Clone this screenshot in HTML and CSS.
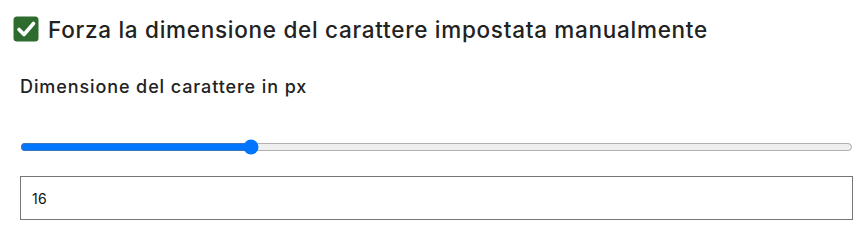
FILE: index.html
```html
<!DOCTYPE html>
<html lang="it">
<head>
<meta charset="utf-8">
<link rel="stylesheet" href="styles.css">
</head>
<body>
<div class="panel">
  <label class="force">
    <span class="check">
      <svg viewBox="0 0 26 26" width="26" height="26">
        <rect x="0.5" y="0.5" width="25" height="25" rx="3.5" fill="#2e6b2f"/>
        <path d="M6 13.5 L11 18.5 L20.5 7.5" fill="none" stroke="#fff" stroke-width="3.6" stroke-linecap="round" stroke-linejoin="round"/>
      </svg>
    </span>
    <span class="force-text">Forza la dimensione del carattere impostata manualmente</span>
  </label>
  <div class="field">
    <div class="field-label">Dimensione del carattere in px</div>
    <input class="range" type="range" min="10" max="32" value="16">
    <input class="num" type="text" value="16">
  </div>
</div>
</body>
</html>
```
FILE: styles.css
```css
html, body {
  margin: 0;
  padding: 0;
  background: #fff;
}
.panel {
  font-family: Inter, "Noto Sans", sans-serif;
  color: #222;
  padding: 16px 7px 0 20px;
}
.force {
  display: flex;
  align-items: center;
  gap: 9px;
  margin-left: -7px;
  height: 26px;
}
.check {
  display: block;
  width: 26px;
  height: 26px;
}
.check svg {
  display: block;
}
.force-text {
  font-size: 22.5px;
  font-weight: 500;
  letter-spacing: 0.72px;
}
.field {
  display: flex;
  flex-direction: column;
  padding-top: 34px;
}
.field-label {
  font-size: 18px;
  font-weight: 500;
  line-height: 22px;
  letter-spacing: 0.9px;
}
.range {
  margin: 41px 0 0 0;
  width: 100%;
  height: 16px;
}
.num {
  margin-top: 21px;
  box-sizing: border-box;
  width: 100%;
  height: 44px;
  border: 1px solid #767676;
  border-radius: 0;
  padding: 0 11px;
  font-family: Inter, sans-serif;
  font-size: 14px;
  letter-spacing: 0.3px;
  color: #111;
}
```
